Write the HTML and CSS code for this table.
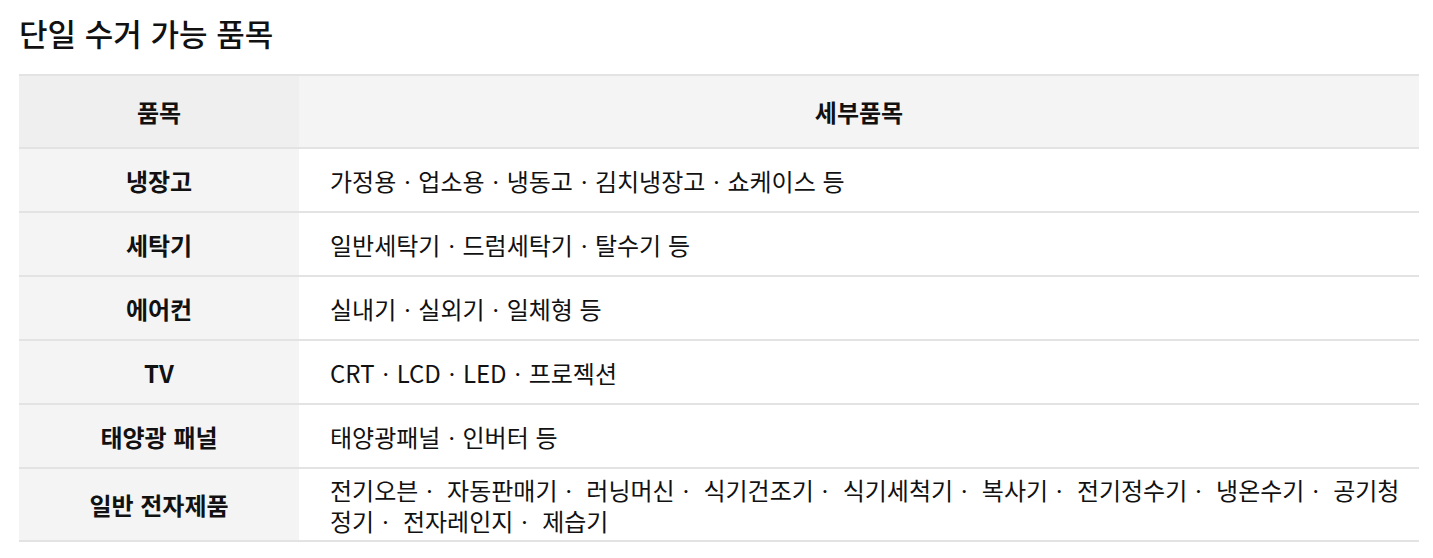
FILE: index.html
```html
<!DOCTYPE html>
<html lang="ko">
<head>
<meta charset="utf-8">
<link rel="stylesheet" href="styles.css">
</head>
<body>
<section class="page">
  <h2 class="title">단일 수거 가능 품목</h2>
  <table class="items">
    <thead>
      <tr>
        <th class="col-name">품목</th>
        <th class="col-detail">세부품목</th>
      </tr>
    </thead>
    <tbody>
      <tr>
        <th class="col-name">냉장고</th>
        <td class="col-detail">가정용ㆍ업소용ㆍ냉동고ㆍ김치냉장고ㆍ쇼케이스 등</td>
      </tr>
      <tr>
        <th class="col-name">세탁기</th>
        <td class="col-detail">일반세탁기ㆍ드럼세탁기ㆍ탈수기 등</td>
      </tr>
      <tr>
        <th class="col-name">에어컨</th>
        <td class="col-detail">실내기ㆍ실외기ㆍ일체형 등</td>
      </tr>
      <tr>
        <th class="col-name">TV</th>
        <td class="col-detail">CRTㆍLCDㆍLEDㆍ프로젝션</td>
      </tr>
      <tr>
        <th class="col-name">태양광 패널</th>
        <td class="col-detail">태양광패널ㆍ인버터 등</td>
      </tr>
      <tr class="tall">
        <th class="col-name">일반 전자제품</th>
        <td class="col-detail">전기오븐ㆍ 자동판매기ㆍ 러닝머신ㆍ 식기건조기ㆍ 식기세척기ㆍ 복사기ㆍ 전기정수기ㆍ 냉온수기ㆍ 공기청정기ㆍ 전자레인지ㆍ 제습기</td>
      </tr>
    </tbody>
  </table>
</section>
</body>
</html>
```

FILE: styles.css
```css
html, body {
  margin: 0;
  padding: 0;
  background: #ffffff;
}

body {
  font-family: "Noto Sans CJK KR", "Noto Sans", sans-serif;
  color: #111111;
}

.page {
  padding: 13px 14px 0 19px;
}

.title {
  margin: 0 0 21px 0;
  font-size: 31px;
  font-weight: 500;
  line-height: 40px;
  color: #111111;
}

.items {
  width: 1400px;
  border-collapse: collapse;
  border-top: 2px solid #e3e3e3;
  font-size: 24px;
  line-height: 31px;
}

.items tr {
  border-bottom: 2px solid #e3e3e3;
}

.items th,
.items td {
  padding: 0;
}

.items .col-name {
  width: 280px;
  text-align: center;
  font-weight: 700;
  background: #f4f4f4;
}

.items thead th {
  height: 71px;
  background: #f4f4f4;
  font-weight: 700;
}

.items thead th.col-name {
  background: #efefef;
}

.items tbody tr {
  height: 64px;
}

.items tbody td {
  padding: 0 31px 0 31px;
  text-align: left;
  font-weight: 400;
  background: #ffffff;
}

.items tbody tr.tall {
  height: 73px;
}

.items tbody tr.tall td {
  padding-top: 4px;
  padding-right: 18px;
  padding-bottom: 4px;
}
```
